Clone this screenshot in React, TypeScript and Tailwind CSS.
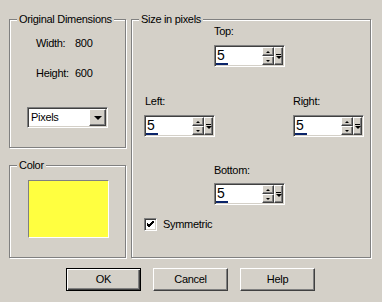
import { ReactNode } from 'react';

const sunken =
  'border border-t-[#808080] border-l-[#808080] border-b-white border-r-white shadow-[inset_1px_1px_0_#404040,inset_-1px_-1px_0_#d4d0c8]';
const raised =
  'border border-t-white border-l-white border-b-[#404040] border-r-[#404040] shadow-[inset_-1px_-1px_0_#808080]';

function Group({ title, className, children }: { title: string; className: string; children?: ReactNode }) {
  return (
    <div
      className={`flex flex-col border border-[#808080] shadow-[inset_1px_1px_0_white,1px_1px_0_white] ${className}`}
    >
      <span className="-mt-[7px] -mb-[6px] ml-[7px] self-start bg-[#d4d0c8] px-[2px] leading-[13px]">
        {title}
      </span>
      {children}
    </div>
  );
}

function Spin() {
  return (
    <div className={`flex h-[22px] w-[71px] bg-white p-[1px] ${sunken}`}>
      <div className="flex flex-1 flex-col">
        <span className="ml-[1px] text-[14px] leading-[16px]">5</span>
        <div className="mt-auto h-[2px] w-[12px] bg-[#0a246a]" />
      </div>
      <div className="flex w-[12px] flex-col">
        <div className={`flex h-[9px] items-center justify-center bg-[#d4d0c8] ${raised}`}>
          <div className="h-0 w-0 border-x-[2px] border-b-[2px] border-x-transparent border-b-black" />
        </div>
        <div className={`flex h-[9px] items-center justify-center bg-[#d4d0c8] ${raised}`}>
          <div className="h-0 w-0 border-x-[2px] border-t-[2px] border-x-transparent border-t-black" />
        </div>
      </div>
      <div className={`flex h-[18px] w-[9px] flex-col items-center justify-center gap-[1px] bg-[#d4d0c8] ${raised}`}>
        <div className="h-[1px] w-[5px] bg-black" />
        <div className="h-0 w-0 border-x-[3px] border-t-[3px] border-x-transparent border-t-black" />
      </div>
    </div>
  );
}

function Button({ label, isDefault }: { label: string; isDefault?: boolean }) {
  return (
    <button
      className={`flex h-[23px] w-[75px] items-center justify-center bg-[#d4d0c8] leading-[13px] ${
        isDefault
          ? 'border border-black shadow-[inset_1px_1px_0_white,inset_-1px_-1px_0_#404040,inset_-2px_-2px_0_#808080]'
          : raised
      }`}
    >
      {label}
    </button>
  );
}

export default function App() {
  return (
    <div className="h-[302px] w-[382px] overflow-hidden bg-[#d4d0c8] pl-[9px] pt-[19px] font-['Liberation_Sans',Arial,sans-serif] text-[11px] leading-[13px] tracking-[-0.3px] text-black">
      <div className="flex">
        <div className="flex w-[117px] flex-col">
          <Group title="Original Dimensions" className="h-[129px]">
            <div className="mt-[17px] flex pl-[26px]">
              <span className="w-[39px]">Width:</span>
              <span>800</span>
            </div>
            <div className="mt-[17px] flex pl-[26px]">
              <span className="w-[39px]">Height:</span>
              <span>600</span>
            </div>
            <div className={`ml-[17px] mt-[27px] flex h-[21px] w-[81px] bg-white p-[1px] ${sunken}`}>
              <span className="flex-1 pl-[2px] leading-[17px]">Pixels</span>
              <div className={`flex w-[17px] items-center justify-center bg-[#d4d0c8] ${raised}`}>
                <div className="h-0 w-0 border-x-[4px] border-t-[4px] border-x-transparent border-t-black" />
              </div>
            </div>
          </Group>
          <Group title="Color" className="mt-[17px] h-[93px]">
            <div className="ml-[18px] mt-[14px] h-[58px] w-[81px] border border-t-[#808080] border-l-[#808080] border-b-white border-r-white bg-[#ffff40]" />
          </Group>
        </div>

        <Group title="Size in pixels" className="ml-[5px] h-[239px] w-[240px]">
          <div className="flex flex-col pl-[12px]">
            <div className="ml-[70px] mt-[5px] flex flex-col">
              <span>Top:</span>
              <div className="mt-[7px]">
                <Spin />
              </div>
            </div>
            <div className="mt-[28px] flex w-[220px] justify-between">
              <div className="flex flex-col">
                <span className="ml-[1px]">Left:</span>
                <div className="mt-[7px]">
                  <Spin />
                </div>
              </div>
              <div className="flex flex-col">
                <span>Right:</span>
                <div className="mt-[7px]">
                  <Spin />
                </div>
              </div>
            </div>
            <div className="ml-[70px] mt-[27px] flex flex-col">
              <span>Bottom:</span>
              <div className="mt-[6px]">
                <Spin />
              </div>
            </div>
            <div className="mt-[13px] flex items-center gap-[6px]">
              <div className={`flex h-[13px] w-[13px] items-center justify-center bg-white ${sunken}`}>
                <svg width="7" height="7" viewBox="0 0 7 7">
                  <path d="M0 2 L2 4 L7 -1 M0 3 L2 5 L7 0 M0 4 L2 6 L7 1" stroke="black" strokeWidth="1" fill="none" />
                </svg>
              </div>
              <span>Symmetric</span>
            </div>
          </div>
        </Group>
      </div>

      <div className="ml-[57px] mt-[10px] flex gap-[12px]">
        <Button label="OK" isDefault />
        <Button label="Cancel" />
        <Button label="Help" />
      </div>
    </div>
  );
}
